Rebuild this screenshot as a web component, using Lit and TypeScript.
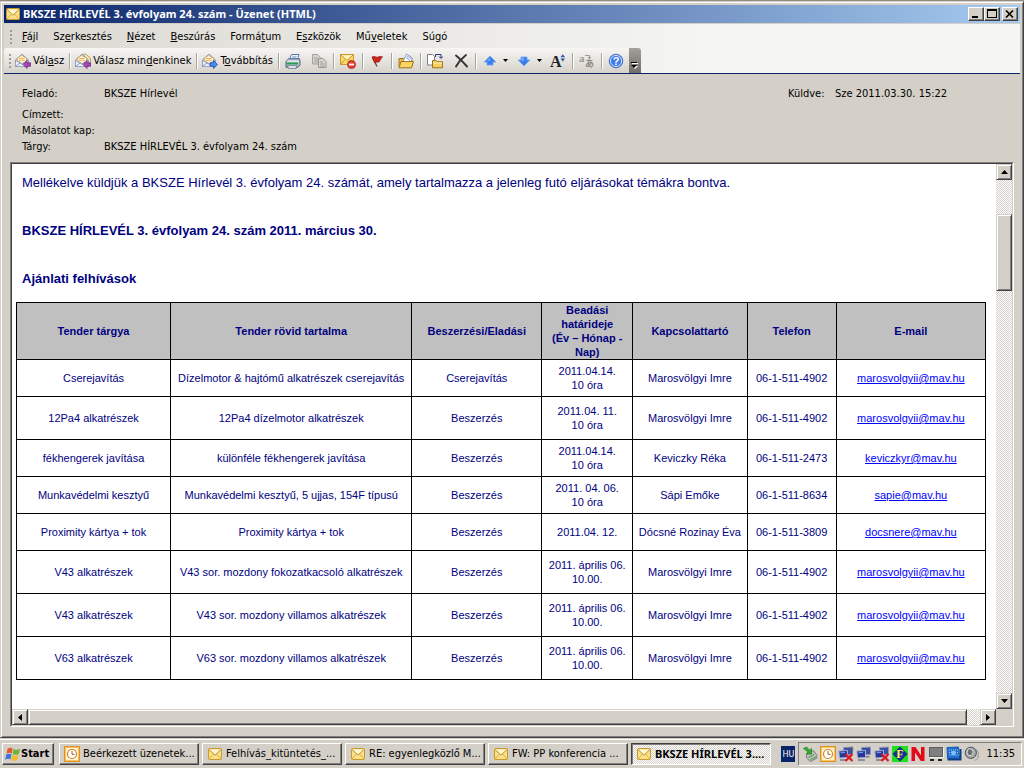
import { LitElement, html, svg, css, TemplateResult } from "lit";
import { customElement } from "lit/decorators.js";
import { classMap } from "lit/directives/class-map.js";

const shape = (body: TemplateResult, w = 16, h = 16) =>
  html`<svg width=${w} height=${h} viewBox="0 0 ${w} ${h}" aria-hidden="true">${body}</svg>`;

const openMail = svg`
  <path d="M.5 7 6.500 1.500h1L13.500 7V13.500H.5z" fill="#dfe8f8" stroke="#7d8db4"/>
  <path d="M2.500 7.500V5L6.500 2.500 11.500 5v3.500L7 10.500z" fill="#fff6dc" stroke="#c9a35c" stroke-width=".8"/>
  <path d="M4 5.500h5.500M4 7.300h6" stroke="#eda64a" stroke-width=".9"/>
  <path d="M.8 7.500 7 11.200 13.200 7.500V13.300H.8z" fill="#e9f0fc"/>
  <path d="M.8 7.500 7 11.200 13.200 7.500M.8 13.200 5 10M13 13.200 9 10" fill="none" stroke="#8494bb" stroke-width=".9"/>`;

const envelope = svg`
  <rect x="1.500" y="2.500" width="13" height="11" rx="1" fill="#fbe08a" stroke="#c9992c"/>
  <path d="M2 3.500 8 9.200 14 3.500" fill="#fff6cf" stroke="#b98d2a"/>
  <path d="M2 13 6.200 8.200M14 13 9.800 8.200" stroke="#dcae47"/>`;

const monitors = svg`
  <path d="M5.500 1.500 14.500 1V8.500L6 9z" fill="#3a4fa8" stroke="#8f97b4"/>
  <path d="M9 10.800h4.500" stroke="#777" stroke-width="1.400"/>
  <path d="M.8 5 9.500 4.500V11.500L1.500 12z" fill="#22379c" stroke="#a9b0cb"/>
  <path d="M2.500 6.800 7 6.500" stroke="#8ea1ee"/>
  <path d="M2 14h7" stroke="#7b7f8e" stroke-width="1.600"/>`;

const redCross = svg`<path d="M7.500 8 14.500 15M14.500 8 7.500 15" stroke="#e0181f" stroke-width="2.200"/>`;

const icons: Record<string, TemplateResult> = {
  mail: shape(envelope),
  reply: shape(svg`${openMail}<path d="M8 11.500 12 7.500V9.800H15.700V13.200H12V15.500z" fill="#a648b4" stroke="#6f2480" stroke-width=".8"/>`),
  replyAll: shape(svg`<path d="M6 3 10 .6 15.400 5V11H9z" fill="#fbe7ae" stroke="#a99355" stroke-width=".8"/>${openMail}<path d="M8 11.500 12 7.500V9.800H15.700V13.200H12V15.500z" fill="#a648b4" stroke="#6f2480" stroke-width=".8"/>`),
  forward: shape(svg`${openMail}<path d="M15.600 11.500 11.500 7.500V9.800H8V13.200H11.500V15.500z" fill="#4f8cf0" stroke="#1c4cb0" stroke-width=".8"/>`),
  print: shape(svg`
    <path d="M4.500 6 6.500 1.500h7.500L12.500 6z" fill="#fff" stroke="#5c74ac"/>
    <path d="M7.300 3.300h4.500M6.500 4.900h4.500" stroke="#6f8fd4" stroke-width=".8"/>
    <path d="M1 8.500 3.500 5.800H14.500L15 8V12L13 14.200H1z" fill="#b9c4d2" stroke="#50607a"/>
    <path d="M2 8.200h12" stroke="#f2f6fb"/>
    <path d="M1.500 10.500h11.500" stroke="#27a04a" stroke-width="2"/>
    <path d="M2.500 12.800h9.500l-1 2.500H3.500z" fill="#fff" stroke="#56657c" stroke-width=".8"/>`),
  copy: shape(svg`
    <path d="M1.500 1.500h5l3 3v6.500h-8z" fill="#d5d4d0" stroke="#a3a19c"/>
    <path d="M3 5h4M3 7h5M3 9h4" stroke="#a3a19c"/>
    <path d="M7.500 5.500h4.500l3 3v6h-7.500z" fill="#d5d4d0" stroke="#989690"/>
    <path d="M9 9h3M9 11h4.500M9 13h4.500" stroke="#a3a19c"/>`),
  block: shape(svg`
    <rect x=".5" y="1.500" width="13" height="10" fill="#fbd86a" stroke="#c99a2e"/>
    <path d="M1 2 7 7.500 13 2" fill="#fff0b4" stroke="#c99a2e"/>
    <path d="M1 11 5 6.500M13 11 9 6.500" fill="none" stroke="#c99a2e"/>
    <circle cx="11.500" cy="11.500" r="4" fill="#e0402c" stroke="#b3271c" stroke-width=".8"/>
    <path d="M9 11.500h5" stroke="#fff" stroke-width="1.800"/>`),
  flag: shape(svg`
    <path d="M3.500 4 8 13.500" stroke="#5c4a3a" stroke-width="1.300"/>
    <path d="M3 4C5.500 2.500 7 5 9 4 10.500 3.300 12 3.500 13.500 3.800 12 5 11 8 10 9 8.500 8.600 7 9.300 5.600 10z" fill="#cf261c" stroke="#93150e" stroke-width=".7"/>`),
  folder: shape(svg`
    <path d="M1 13.500V5.500h4.500l1.500 1.500h7v6.500z" fill="#e8b84a" stroke="#a27418"/>
    <path d="M5 8.500 8.500 1l6 4L12 10z" fill="#fff" stroke="#7486b2" stroke-width=".8"/>
    <path d="M8 4.500 12 7.500M9 3l4.500 3" stroke="#6f8fd8" stroke-width=".9"/>
    <path d="M1 14.800 3 8.500h12.500l-2 6.300z" fill="#fbd564" stroke="#a27418"/>`),
  move: shape(svg`
    <path d="M.5 1.500h5l2 2v8.500h-7z" fill="#fff" stroke="#7a7f8e"/>
    <path d="M8.500 4V1.500h5.500V5M12 3.500 14 5.500 15.800 3.500" fill="none" stroke="#29356e"/>
    <path d="M5.500 14.800v-7.300h3.500l1 1.200h5.500v6.100z" fill="#f8ce62" stroke="#9c7318"/>
    <path d="M6.500 10h8.500" stroke="#fff2c0"/>`),
  remove: shape(svg`
    <path d="M3 2.500C6 5 10 9 14 13.500M13 2C9 5 5.500 9 3 13.500" fill="none" stroke="#333" stroke-width="1.900" stroke-linecap="round"/>`),
  up: shape(svg`<path d="M8 3 13.800 9H11V12H5V9H2.200z" fill="#3b7fee" stroke="#6ba2f5" stroke-width=".8"/><path d="M8 4.500 4.800 8H8z" fill="#74a9fa"/>`),
  down: shape(svg`<path d="M8 13 13.800 7H11V4H5V7H2.200z" fill="#3b7fee" stroke="#6ba2f5" stroke-width=".8"/><path d="M5.500 4.500H8V8H5.500z" fill="#74a9fa"/>`),
  font: shape(svg`
    <text x="0" y="14" font-family="Liberation Serif, serif" font-size="16" font-weight="bold" fill="#222">A</text>
    <path d="M10.500 4.200 12.800 1.200 15 4.200zM10.500 5.500 12.800 8.500 15 5.500z" fill="#2d55a8"/>`),
  translate: shape(svg`
    <text x="0" y="9" font-family="Liberation Serif, serif" font-size="11" font-weight="bold" fill="#999">a</text>
    <path d="M6 2.500h4.500V5M9 4l1.500 1.800L12 4" fill="none" stroke="#999"/>
    <text x="6" y="14" font-family="Noto Sans CJK JP, sans-serif" font-size="9" font-weight="bold" fill="#8c8c8c">あ</text>`),
  help: shape(svg`
    <circle cx="8" cy="8" r="6.800" fill="#3f7be8" stroke="#2f62c8" stroke-width=".8"/>
    <circle cx="8" cy="8" r="5.600" fill="none" stroke="#e3edff" stroke-width=".9"/>
    <text x="8" y="12" text-anchor="middle" font-family="Liberation Sans, sans-serif" font-size="11" font-weight="bold" fill="#fff">?</text>`),
  caret: shape(svg`<path d="M0 0h5L2.500 3z" fill="#000"/>`, 5, 3),
  more: shape(svg`<path d="M1 1h6v1H1zM1 4h6L4 7z" fill="#fff"/><path d="M0 0h6v1H0zM0 3h6L3 6z" fill="#000"/>`, 7, 7),
  outlook: shape(svg`
    <rect x=".5" y=".5" width="15" height="15" fill="#fdf0cf" stroke="#e08f22"/>
    <rect x="1.500" y="1.500" width="13" height="13" fill="none" stroke="#f6c66c"/>
    <circle cx="8" cy="8" r="4.500" fill="#fff" stroke="#d4812a" stroke-width="1.200"/>
    <path d="M8 5v3.300h2.500" fill="none" stroke="#a35a12"/>`),
  start: shape(svg`
    <path d="M2.600 2.700C4.500 1.400 6 1.600 7.700 2.600L6.700 7.500C5 6.500 3.500 6.400 1.500 7.600z" fill="#e8572a"/>
    <path d="M8.600 3C10.500 4.100 12.500 4.100 15 2.700L13.800 7.900C11.500 9.100 9.500 9 7.500 8z" fill="#6db33a"/>
    <path d="M1.300 8.500C3.300 7.300 4.800 7.400 6.500 8.400L5.400 13.500C3.800 12.500 2.300 12.400 .2 13.700z" fill="#3f74d8"/>
    <path d="M7.300 8.900C9.200 9.900 11.200 10 13.600 8.800L12.400 14C10 15.200 8 15 6.200 14z" fill="#f3bb2a"/>`),
  safely: shape(svg`
    <path d="M5 8 11.500 4.500 15 9.500 14.500 12.500 8 15.500 4 11z" fill="#b9c0b8" stroke="#66706a" stroke-width=".8"/>
    <path d="M6.500 11.500 12 8.500M8.500 13.500 14 11" stroke="#4a8f48"/>
    <path d="M1.500 2.500 4.500 1 7.500 4 9.500 2.500V8H4L6 6z" fill="#35ad31" stroke="#187016" stroke-width=".6"/>`),
  wireless: shape(svg`${monitors}<path d="M11.500 1.500q1.500 2 0 4.500M14 .5q2 3 0 6.500" fill="none" stroke="#555" stroke-width=".8"/>${redCross}`),
  network: shape(monitors),
  offline: shape(svg`${monitors}${redCross}`),
  shield: shape(svg`
    <rect width="16" height="16" fill="#1fe01f"/>
    <path d="M8 .8 15.200 8 8 15.200 .8 8z" fill="#1a2f9c" stroke="#0c1664" stroke-width=".6"/>
    <text x="8" y="12" text-anchor="middle" font-family="Liberation Serif, serif" font-size="12" font-weight="bold" fill="#fff04a">F</text>`),
  novell: shape(svg`<path d="M1.500 15V1H5.500L11 9.500V1H14.500V15H10.800L5 6.500V15z" fill="#e30a17"/>`),
  display: shape(svg`
    <rect x="1.500" y="1.500" width="13" height="9" fill="#7f7f7f" stroke="#5c5c5c"/>
    <path d="M1.500 11.500h14V2" fill="none" stroke="#f2f2f2"/>
    <path d="M2 14h4M10 14h4" stroke="#222" stroke-width="1.800"/>`),
  graphics: shape(svg`
    <path d="M1 1.500 12.500 1 13.500 12.500 1.500 12.500z" fill="#1f6fd0" stroke="#1c5cae"/>
    <path d="M1.500 13.500 14.500 13.500V3" fill="none" stroke="#0d3e86" stroke-width="2"/>
    <path d="M3 4h9M3 6.500h9M3.500 9h9" stroke="#a9d2ff" stroke-dasharray="1 1"/>
    <path d="M5.500 5h4v4h-4z" fill="#7ec0ff"/>`),
  volume: shape(svg`
    <path d="M12.500 3.500q3.500 3 1 7.500M10.500 14.500q3.500-1 4.500-4.500" fill="none" stroke="#9a9ca0"/>
    <circle cx="6.800" cy="6.800" r="5.600" fill="#a7a9ad" stroke="#4b4d51"/>
    <ellipse cx="6" cy="6.200" rx="3" ry="3.500" fill="#6a6d72" stroke="#d9dbde"/>`),
  minimize: shape(svg`<path d="M1 7h6v2H1z" fill="#000"/>`, 10, 10),
  maximize: shape(svg`<path d="M0 0h10v9H0zM1 2v6h8V2z" fill="#000" fill-rule="evenodd"/>`, 10, 10),
  close: shape(svg`<path d="M1 1.500 8 8.500M8 1.500 1 8.500" stroke="#000" stroke-width="1.700"/>`, 10, 10),
  arrowUp: shape(svg`<path d="M0 4h7L3.500 0z"/>`, 7, 4),
  arrowDown: shape(svg`<path d="M0 0h7L3.500 4z"/>`, 7, 4),
  arrowLeft: shape(svg`<path d="M4 0v7L0 3.500z"/>`, 4, 7),
  arrowRight: shape(svg`<path d="M0 0v7l4-3.500z"/>`, 4, 7),
};

@customElement("scroll-bar")
export class ScrollBar extends LitElement {
  static properties = {
    horizontal: { type: Boolean, reflect: true },
    before: { type: Number },
    thumb: { type: Number },
    after: { type: Number },
  };
  declare horizontal: boolean;
  declare before: number;
  declare thumb: number;
  declare after: number;

  static styles = css`
    :host { display: flex; flex-direction: column; min-width: 0; min-height: 0; background: repeating-conic-gradient(#fff 0 25%, #d4d0c8 0 50%) 0 0 / 2px 2px; }
    :host([horizontal]) { flex-direction: row; }
    button, .thumb { box-sizing: border-box; background: #d4d0c8; border: 1px solid; border-color: #d4d0c8 #404040 #404040 #d4d0c8; box-shadow: inset 1px 1px #fff, inset -1px -1px #808080; }
    button { flex: none; width: 16px; height: 16px; padding: 0; display: flex; align-items: center; justify-content: center; }
    svg { display: block; }
  `;

  render() {
    return html`
      <button aria-label=${this.horizontal ? "Balra" : "Fel"}>${this.horizontal ? icons.arrowLeft : icons.arrowUp}</button>
      <div style="flex:${this.before}"></div>
      <div class="thumb" style="flex:${this.thumb}"></div>
      <div style="flex:${this.after}"></div>
      <button aria-label=${this.horizontal ? "Jobbra" : "Le"}>${this.horizontal ? icons.arrowRight : icons.arrowDown}</button>
    `;
  }
}

interface Tender {
  subject: string;
  summary: string;
  kind: string;
  due: string[];
  contact: string;
  phone: string;
  email: string;
  tall?: boolean;
}

const tenders: Tender[] = [
  { subject: "Cserejavítás", summary: "Dízelmotor & hajtómű alkatrészek cserejavítás", kind: "Cserejavítás", due: ["2011.04.14.", "10 óra"], contact: "Marosvölgyi Imre", phone: "06-1-511-4902", email: "marosvolgyii@mav.hu" },
  { subject: "12Pa4 alkatrészek", summary: "12Pa4 dízelmotor alkatrészek", kind: "Beszerzés", due: ["2011.04. 11.", "10 óra"], contact: "Marosvölgyi Imre", phone: "06-1-511-4902", email: "marosvolgyii@mav.hu", tall: true },
  { subject: "fékhengerek javítása", summary: "különféle fékhengerek javítása", kind: "Beszerzés", due: ["2011.04.14.", "10 óra"], contact: "Keviczky Réka", phone: "06-1-511-2473", email: "keviczkyr@mav.hu" },
  { subject: "Munkavédelmi kesztyű", summary: "Munkavédelmi kesztyű, 5 ujjas, 154F típusú", kind: "Beszerzés", due: ["2011. 04. 06.", "10 óra"], contact: "Sápi Emőke", phone: "06-1-511-8634", email: "sapie@mav.hu" },
  { subject: "Proximity kártya + tok", summary: "Proximity kártya + tok", kind: "Beszerzés", due: ["2011.04. 12."], contact: "Dócsné Rozinay Éva", phone: "06-1-511-3809", email: "docsnere@mav.hu" },
  { subject: "V43 alkatrészek", summary: "V43 sor. mozdony fokozatkacsoló alkatrészek", kind: "Beszerzés", due: ["2011. április 06.", "10.00."], contact: "Marosvölgyi Imre", phone: "06-1-511-4902", email: "marosvolgyii@mav.hu", tall: true },
  { subject: "V43 alkatrészek", summary: "V43 sor. mozdony villamos alkatrészek", kind: "Beszerzés", due: ["2011. április 06.", "10.00."], contact: "Marosvölgyi Imre", phone: "06-1-511-4902", email: "marosvolgyii@mav.hu", tall: true },
  { subject: "V63 alkatrészek", summary: "V63 sor. mozdony villamos alkatrészek", kind: "Beszerzés", due: ["2011. április 06.", "10.00."], contact: "Marosvölgyi Imre", phone: "06-1-511-4902", email: "marosvolgyii@mav.hu", tall: true },
];

@customElement("mail-message")
export class MailMessage extends LitElement {
  static styles = css`
    :host { display: block; overflow: hidden; background: #fff; color: #000080; font: 13px/16px "Liberation Sans", Arial, sans-serif; padding: 11px 10px 0 4px; }
    p, h1, h2 { margin: 0 6px 32px; font-size: 13px; line-height: 16px; }
    h2 { margin-bottom: 15px; }
    table { width: 100%; table-layout: fixed; border-collapse: collapse; font-size: 11px; line-height: 14px; text-align: center; }
    th, td { box-sizing: border-box; border: 1px solid #000; padding: 0 4px; height: 37px; }
    th { background: #c0c0c0; height: 57px; }
    .tall td { height: 43px; }
    a { color: #0000ff; }
    .c1 { width: 15.9%; }
    .c2 { width: 24.9%; }
    .c3 { width: 13.4%; }
    .c4 { width: 9.4%; }
    .c5 { width: 11.8%; }
    .c6 { width: 9.2%; }
    .c7 { width: 15.4%; }
  `;

  render() {
    return html`
      <p>Mellékelve küldjük a BKSZE Hírlevél 3. évfolyam 24. számát, amely tartalmazza a jelenleg futó eljárásokat témákra bontva.</p>
      <h1>BKSZE HÍRLEVÉL 3. évfolyam 24. szám 2011. március 30.</h1>
      <h2>Ajánlati felhívások</h2>
      <table>
        <colgroup>
          <col class="c1" /><col class="c2" /><col class="c3" /><col class="c4" /><col class="c5" /><col class="c6" /><col class="c7" />
        </colgroup>
        <thead>
          <tr>
            <th>Tender tárgya</th>
            <th>Tender rövid tartalma</th>
            <th>Beszerzési/Eladási</th>
            <th>Beadási<br />határideje<br />(Év – Hónap -<br />Nap)</th>
            <th>Kapcsolattartó</th>
            <th>Telefon</th>
            <th>E-mail</th>
          </tr>
        </thead>
        <tbody>
          ${tenders.map(
            (t) => html`<tr class=${classMap({ tall: !!t.tall })}>
              <td>${t.subject}</td>
              <td>${t.summary}</td>
              <td>${t.kind}</td>
              <td>${t.due.map((line, i) => (i ? html`<br />${line}` : line))}</td>
              <td>${t.contact}</td>
              <td>${t.phone}</td>
              <td><a href="mailto:${t.email}">${t.email}</a></td>
            </tr>`,
          )}
        </tbody>
      </table>
    `;
  }
}

const menus: [string, string, string][] = [
  ["", "F", "ájl"],
  ["Sz", "e", "rkesztés"],
  ["", "N", "ézet"],
  ["", "B", "eszúrás"],
  ["Formá", "t", "um"],
  ["E", "s", "zközök"],
  ["Mű", "v", "eletek"],
  ["Sú", "g", "ó"],
];

const tasks: { icon: string; label: string; active?: boolean }[] = [
  { icon: "outlook", label: "Beérkezett üzenetek..." },
  { icon: "mail", label: "Felhívás_kitüntetés_..." },
  { icon: "mail", label: "RE: egyenlegközlő M..." },
  { icon: "mail", label: "FW: PP konferencia ..." },
  { icon: "mail", label: "BKSZE HÍRLEVÉL 3....", active: true },
];

const tray = ["safely", "outlook", "wireless", "network", "offline", "shield", "novell", "display", "graphics", "volume"];

@customElement("app-root")
export class AppRoot extends LitElement {
  static styles = css`
    :host { display: flex; flex-direction: column; box-sizing: border-box; min-height: 100vh; padding-top: 1px; background: #948b84; color: #000; font: 11px/16px "DejaVu Sans Condensed", Tahoma, sans-serif; }
    svg { display: block; flex: none; }
    button { box-sizing: border-box; font: inherit; color: inherit; padding: 0; border: 0; background: none; display: flex; align-items: center; white-space: nowrap; }
    .window { flex: 1; display: flex; flex-direction: column; background: #d4d0c8; border: 1px solid; border-color: #d4d0c8 #404040 #404040 #d4d0c8; box-shadow: inset 1px 1px #fff, inset -1px -1px #808080; padding: 3px; }
    .title { display: flex; align-items: center; height: 18px; margin-bottom: 1px; padding: 0 2px 0 1px; background: linear-gradient(90deg, #0a246a, #a6caf0); color: #fff; font: bold 11px/16px "Noto Sans", Tahoma, sans-serif; }
    .title h1 { flex: 1; margin: 0 0 0 2px; font: inherit; white-space: nowrap; }
    .title button, .start, .task { background: #d4d0c8; border: 1px solid; border-color: #fff #404040 #404040 #fff; box-shadow: inset -1px -1px #808080; }
    .title button { width: 16px; height: 14px; justify-content: center; }
    .title .close { margin-left: 2px; }
    .bars { background: linear-gradient(90deg, #dbd8d1, #f5f5f3 70%); border-bottom: 1px solid #0a246a; }
    .menu, .tools { display: flex; align-items: center; box-sizing: border-box; }
    .menu { height: 24px; padding: 2px 0 0 6px; gap: 15px; }
    .grip { flex: none; width: 2px; height: 14px; background: repeating-linear-gradient(#a09d96 0 2px, transparent 2px 4px); }
    .menu .grip { margin-right: -5px; }
    .tools { width: fit-content; height: 25px; padding-left: 5px; background: linear-gradient(#f7f6f4, #d6d2ca); border-radius: 3px 3px 0 0; }
    .tools button { margin: 0 5px; gap: 2px; }
    .tools .labelled { margin: 0 4px; }
    .tools .arrow { margin: 0 3px 0 0; }
    .sep { width: 1px; height: 16px; background: #a5a29a; box-shadow: 1px 0 #fff; margin: 0 1px; }
    .tools .more { width: 12px; height: 25px; margin: 0; padding-bottom: 4px; background: linear-gradient(#a3a19c, #6f6d69); border-radius: 0 3px 0 0; align-items: flex-end; justify-content: center; }
    .fields { display: grid; grid-template-columns: 82px 1fr 47px 185px; margin: 12px 0 7px; padding-left: 18px; }
    .fields span { height: 16px; }
    .fields .first { margin-bottom: 5px; }
    .value { grid-column: span 3; }
    .value.short { grid-column: span 1; }
    .pane { flex: 1; display: grid; margin: 0 6px 7px; background: #d4d0c8; border: 1px solid; border-color: #808080 #fff #fff #808080; }
    .inner { display: grid; grid-template: 1fr 16px / minmax(0, 1fr) 16px; border: 1px solid; border-color: #404040 #d4d0c8 #d4d0c8 #404040; }
    .taskbar { display: flex; align-items: center; box-sizing: border-box; height: 30px; padding: 0 2px; background: #d4d0c8; border-top: 1px solid #d4d0c8; box-shadow: inset 0 1px #fff; }
    .start { height: 22px; width: 52px; padding-left: 2px; font-weight: bold; margin-right: 5px; }
    .task { flex: 0 1 140px; min-width: 0; height: 22px; padding-left: 4px; gap: 3px; margin-right: 3px; }
    .task.active { font: bold 11px/16px "Noto Sans", Tahoma, sans-serif; border-color: #404040 #fff #fff #404040; box-shadow: inset 1px 1px #808080; background: repeating-conic-gradient(#fff 0 25%, #d4d0c8 0 50%) 0 0 / 2px 2px; }
    .language { margin-left: auto; width: 14px; height: 16px; background: #0a246a; color: #fff; text-align: center; font-size: 9px; }
    .tray { display: flex; align-items: center; gap: 2px; box-sizing: border-box; height: 24px; margin-left: 3px; padding: 0 6px 0 3px; border: 1px solid; border-color: #808080 #fff #fff #808080; }
    time { margin-left: 4px; }
  `;

  render() {
    const sep = html`<span class="sep"></span>`;
    const tool = (name: string, label: string) => html`<button aria-label=${label}>${icons[name]}</button>`;
    return html`
      <main class="window">
        <header class="title">
          ${icons.mail}
          <h1>BKSZE HÍRLEVÉL 3. évfolyam 24. szám - Üzenet (HTML)</h1>
          <button aria-label="Kis méret">${icons.minimize}</button>
          <button aria-label="Teljes méret">${icons.maximize}</button>
          <button class="close" aria-label="Bezárás">${icons.close}</button>
        </header>
        <div class="bars">
          <nav class="menu">
            <span class="grip"></span>
            ${menus.map(([a, key, b]) => html`<button><span>${a}<u>${key}</u>${b}</span></button>`)}
          </nav>
          <div class="tools">
            <span class="grip"></span>
            <button class="labelled">${icons.reply}<span>Vál<u>a</u>sz</span></button>${sep}
            <button class="labelled">${icons.replyAll}<span>Válasz min<u>d</u>enkinek</span></button>${sep}
            <button class="labelled">${icons.forward}<span>T<u>o</u>vábbítás</span></button>${sep}
            ${tool("print", "Nyomtatás")}${tool("copy", "Másolás")}${sep}
            ${tool("block", "Feladó letiltása")}${sep}
            ${tool("flag", "Megjelölés")}${sep}
            ${tool("folder", "Megnyitás")}${sep}
            ${tool("move", "Áthelyezés mappába")}${tool("remove", "Törlés")}${sep}
            ${tool("up", "Előző elem")}<button class="arrow" aria-label="Előző elemek">${icons.caret}</button>
            ${tool("down", "Következő elem")}<button class="arrow" aria-label="Következő elemek">${icons.caret}</button>
            ${tool("font", "Betűméret")}${sep}
            ${tool("translate", "Fordítás")}${sep}
            ${tool("help", "Súgó")}
            <button class="more" aria-label="Eszköztár beállításai">${icons.more}</button>
          </div>
        </div>
        <section class="fields">
          <span class="first">Feladó:</span><span class="value short">BKSZE Hírlevél</span><span>Küldve:</span><span>Sze 2011.03.30. 15:22</span>
          <span>Címzett:</span><span class="value"></span>
          <span>Másolatot kap:</span><span class="value"></span>
          <span>Tárgy:</span><span class="value">BKSZE HÍRLEVÉL 3. évfolyam 24. szám</span>
        </section>
        <div class="pane">
          <div class="inner">
            <mail-message></mail-message>
            <scroll-bar .before=${34} .thumb=${75} .after=${404}></scroll-bar>
            <scroll-bar horizontal .before=${0} .thumb=${939} .after=${13}></scroll-bar>
          </div>
        </div>
      </main>
      <footer class="taskbar">
        <button class="start">${icons.start}<span>Start</span></button>
        ${tasks.map((t) => html`<button class="task ${classMap({ active: !!t.active })}">${icons[t.icon]}<span>${t.label}</span></button>`)}
        <span class="language">HU</span>
        <div class="tray">${tray.map((name) => icons[name])}<time>11:35</time></div>
      </footer>
    `;
  }
}
